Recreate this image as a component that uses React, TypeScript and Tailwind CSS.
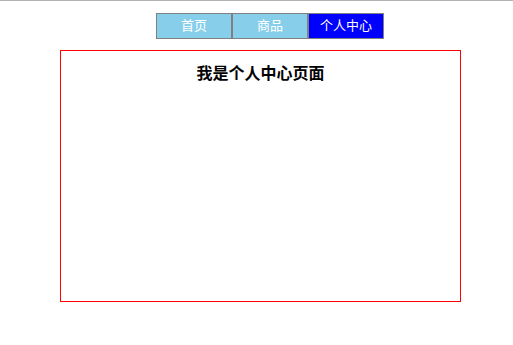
import { useState } from 'react';

const tabs = ['首页', '商品', '个人中心'];

export default function App() {
  const [active, setActive] = useState(2);

  return (
    <div
      className="w-[513px] h-[345px] bg-white border-t border-[#b3b3b3]"
      style={{ fontFamily: '"Liberation Sans", "Noto Sans CJK SC", sans-serif' }}
    >
      {/* 导航 */}
      <div className="flex pl-[156px] pt-[12px]">
        {tabs.map((t, i) => (
          <div
            key={t}
            onClick={() => setActive(i)}
            className={`w-[76px] h-[26px] border border-[#808080] flex items-center justify-center text-[13px] text-white cursor-pointer ${
              i === active ? 'bg-[#0000ff]' : 'bg-[#87ceeb]'
            }`}
          >
            {t}
          </div>
        ))}
      </div>

      {/* 内容 */}
      <div className="ml-[60px] mt-[11px] w-[401px] h-[252px] border border-[#ff0000] pt-[12px]">
        <h3 className="text-center text-[16px] font-bold text-black leading-[21px]">
          我是个人中心页面
        </h3>
      </div>
    </div>
  );
}
